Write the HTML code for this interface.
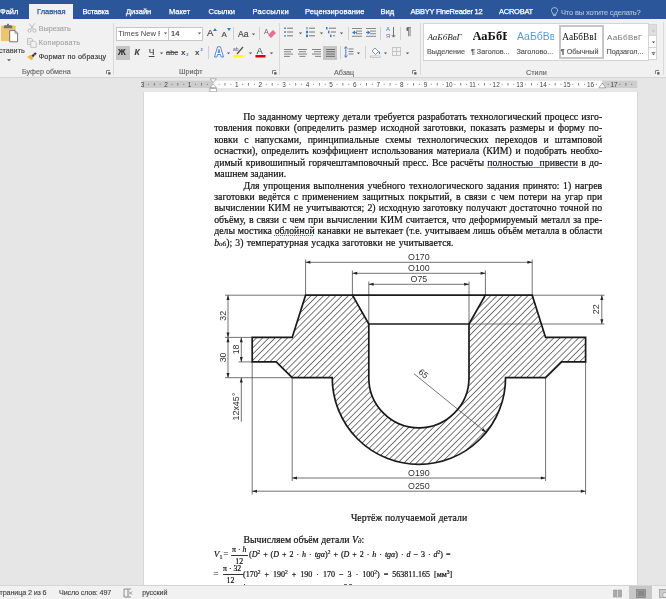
<!DOCTYPE html>
<html><head><meta charset="utf-8">
<style>
*{margin:0;padding:0;box-sizing:border-box}
html{}body{will-change:transform;width:666px;height:599px;overflow:hidden;background:#e6e6e6;font-family:"Liberation Sans",sans-serif}
.a{position:absolute;white-space:nowrap}
#tabs{position:absolute;left:0;top:0;width:666px;height:19px;background:#2b579a}
.tab{position:absolute;top:6px;font-size:7.5px;color:#fff;line-height:12px;-webkit-text-stroke:0.25px currentColor}
#ribbon{position:absolute;left:0;top:19px;width:666px;height:59px;background:#f1f1f1;border-bottom:1px solid #d5d5d5}
.rt{-webkit-text-stroke:0.15px currentColor;position:absolute;font-size:7.2px;color:#444;line-height:10px;white-space:nowrap}
.gl{-webkit-text-stroke:0.12px currentColor;position:absolute;font-size:7.2px;color:#666;line-height:10px;white-space:nowrap}
.sep{position:absolute;width:1px;background:#dadada}
#page{position:absolute;left:143.7px;top:92px;width:493.5px;height:493px;background:#fff;box-shadow:-0.6px 0 0 #cfcfcf,0.6px 0 0 #cfcfcf}
.ln{-webkit-text-stroke:0.2px #111;position:absolute;left:214px;width:388px;font-family:"Liberation Serif",serif;font-size:9.8px;line-height:11.4px;white-space:nowrap;color:#111;text-align:justify;text-align-last:justify}
#status{position:absolute;left:0;top:585px;width:666px;height:14px;background:#f1f1f1;border-top:1px solid #d5d5d5}
.st{-webkit-text-stroke:0.12px currentColor;position:absolute;top:2px;font-size:7.2px;color:#444;line-height:10px;white-space:nowrap}
.wv{text-decoration:underline solid #6a82d8;text-decoration-thickness:0.9px;text-underline-offset:1.3px}
.wr{text-decoration:underline dotted #e04848;text-decoration-thickness:1px;text-underline-offset:1.2px}
</style></head><body>
<div id="tabs">
  <div class="tab" style="left:0">Файл</div>
  <div style="position:absolute;left:29px;top:4px;width:44px;height:15px;background:#f1f1f1"></div>
  <div class="tab" style="left:37px;color:#2b579a">Главная</div>
  <div class="tab" style="left:82.5px;letter-spacing:-0.25px">Вставка</div>
  <div class="tab" style="left:126px">Дизайн</div>
  <div class="tab" style="left:169px">Макет</div>
  <div class="tab" style="left:208.5px">Ссылки</div>
  <div class="tab" style="left:252.5px;letter-spacing:0.35px">Рассылки</div>
  <div class="tab" style="left:305px;letter-spacing:0.12px">Рецензирование</div>
  <div class="tab" style="left:380.5px">Вид</div>
  <div class="tab" style="left:410.5px;letter-spacing:-0.25px">ABBYY FineReader 12</div>
  <div class="tab" style="left:499px;letter-spacing:-0.25px">ACROBAT</div>
  <svg class="a" style="left:550.5px;top:6.8px" width="7" height="10" viewBox="0 0 7 10"><path d="M3.5 0.6 A2.9 2.9 0 0 1 5.2 6 V7.3 H1.8 V6 A2.9 2.9 0 0 1 3.5 0.6Z" fill="none" stroke="#c0cee3" stroke-width="0.8"/><path d="M2 8.6 H5" stroke="#c0cee3" stroke-width="0.8"/></svg>
  <div class="tab" style="left:561px;top:6.8px;color:#b3c3dd;letter-spacing:-0.15px;-webkit-text-stroke:0.1px currentColor">Что вы хотите сделать?</div>
</div>
<div id="ribbon">
  <!-- clipboard group -->
  <svg class="a" style="left:0;top:4px" width="20" height="20" viewBox="0 0 20 20">
    <path d="M1.9 2.5 H14.7 Q15.7 2.5 15.7 3.5 V18 H0.9 V3.5 Q0.9 2.5 1.9 2.5Z" fill="#eac673"/>
    <path d="M3.8 5.2 V3.5 Q3.8 2.2 5.5 2.2 H6.8 Q7 0.6 8 0.6 Q9 0.6 9.2 2.2 H10.6 Q12.3 2.2 12.3 3.5 V5.2Z" fill="#6f6f6f"/>
    <path d="M9.7 7.6 H15 L17.6 10.2 V18.8 H9.7Z" fill="#fff" stroke="#6a6a6a" stroke-width="0.9"/>
    <path d="M15 7.6 V10.2 H17.6" fill="none" stroke="#6a6a6a" stroke-width="0.7"/>
  </svg>
  <div class="rt" style="left:-1px;top:26.5px">ставить</div>
  <svg class="a" style="left:6.5px;top:39.5px" width="4" height="3"><path d="M0 0.2 H4 L2 2.2Z" fill="#555"/></svg>
  <svg class="a" style="left:27px;top:4px" width="10" height="10" viewBox="0 0 10 10"><path d="M2.2 0.3 L6.3 6.3 M7.8 0.3 L3.7 6.3" stroke="#b5b5b5" stroke-width="0.9" fill="none"/><circle cx="2.5" cy="7.6" r="1.6" fill="none" stroke="#b5b5b5" stroke-width="0.9"/><circle cx="7.5" cy="7.6" r="1.6" fill="none" stroke="#b5b5b5" stroke-width="0.9"/></svg>
  <div class="rt" style="left:38.7px;top:4.8px;color:#a6a6a6">Вырезать</div>
  <svg class="a" style="left:27px;top:19px" width="10" height="10" viewBox="0 0 10 10"><path d="M0.5 0.5 H4.5 L5.5 1.5 V6.5 H0.5Z" fill="#eee" stroke="#b5b5b5" stroke-width="0.8"/><path d="M3.8 3.3 H7.8 L9.2 4.7 V9.3 H3.8Z" fill="#f4f4f4" stroke="#b5b5b5" stroke-width="0.8"/><path d="M1.5 3 H4 M1.5 4.5 H3" stroke="#c8c8c8" stroke-width="0.6"/></svg>
  <div class="rt" style="left:38.7px;top:19.2px;color:#a6a6a6;letter-spacing:0.3px">Копировать</div>
  <svg class="a" style="left:27px;top:33px" width="10" height="9" viewBox="0 0 10 9"><path d="M0 5 L3.6 2.8 L6.4 5.6 L5 8.6 Z" fill="#e8b84a"/><path d="M4.4 3.4 L8.2 0.2 L9.8 1.6 L6.2 5.2Z" fill="#3a3a3a"/><path d="M6.3 1.8 L8 3.4" stroke="#e8e8e8" stroke-width="0.5"/></svg>
  <div class="rt" style="left:38.7px;top:33.3px;color:#333;letter-spacing:0.18px">Формат по образцу</div>
  <div class="gl" style="left:22px;top:48.3px">Буфер обмена</div>
  <svg class="a" style="left:105.7px;top:50.8px" width="5" height="5"><path d="M0.5 4 V0.5 H4" fill="none" stroke="#777" stroke-width="0.9"/><rect x="2.2" y="2.2" width="2.3" height="2.3" fill="#555"/></svg>
  <div class="sep" style="left:113px;top:4px;height:52px"></div>

  <!-- font group -->
  <div class="a" style="left:116px;top:7.5px;width:53px;height:14px;background:#fff;border:1px solid #c6c6c6"></div>
  <div class="a" style="left:169px;top:7.5px;width:34px;height:14px;background:#fff;border:1px solid #c6c6c6;border-left:none"></div>
  <div class="rt" style="left:118.3px;top:9.5px;font-size:7.6px;color:#444;width:42px;overflow:hidden;-webkit-text-stroke:0">Times New Roman</div>
  <svg class="a" style="left:162.5px;top:13px" width="5" height="3"><path d="M0.8 0.4H4.2L2.5 2.2Z" fill="#555"/></svg>
  <div class="rt" style="left:171px;top:9.5px;font-size:7.6px;color:#333">14</div>
  <svg class="a" style="left:196.5px;top:13px" width="5" height="3"><path d="M0.8 0.4H4.2L2.5 2.2Z" fill="#555"/></svg>
  <div class="rt" style="left:207px;top:9px;font-size:9.5px;color:#444">A</div>
  <svg class="a" style="left:213px;top:9px" width="4" height="3"><path d="M0 3L2 0L4 3Z" fill="#3b7ac2"/></svg>
  <div class="rt" style="left:221.5px;top:10.5px;font-size:8px;color:#444">A</div>
  <svg class="a" style="left:227px;top:9px" width="4" height="3"><path d="M0 0L2 3L4 0Z" fill="#3b7ac2"/></svg>
  <div class="sep" style="left:233px;top:8px;height:13px;background:#d0d0d0"></div>
  <div class="rt" style="left:238px;top:9.5px;font-size:8.6px;color:#444">Aa</div>
  <svg class="a" style="left:250.5px;top:14px" width="5" height="3"><path d="M0.8 0.4H4.2L2.5 2.2Z" fill="#555"/></svg>
  <div class="sep" style="left:259px;top:8px;height:13px;background:#d0d0d0"></div>
  <svg class="a" style="left:264px;top:8px" width="12" height="12" viewBox="0 0 12 12"><text x="0" y="7" font-size="7" font-family="Liberation Sans" fill="#666">A</text><path d="M4 8 L9 3 L12 6 L7 11Z" fill="#e8708a"/></svg>

  <div class="a" style="left:116px;top:26.5px;width:13.5px;height:14px;background:#c5c5c5"></div>
  <div class="rt" style="left:118px;top:28px;font-size:8.5px;color:#333;font-weight:bold">Ж</div>
  <div class="rt" style="left:134.5px;top:28px;font-size:8.5px;color:#444;font-style:italic;font-weight:bold">К</div>
  <div class="rt" style="left:148.8px;top:28px;font-size:8.5px;color:#444;text-decoration:underline">Ч</div>
  <svg class="a" style="left:158.5px;top:33px" width="5" height="3"><path d="M0.8 0.4H4.2L2.5 2.2Z" fill="#555"/></svg>
  <div class="rt" style="left:166px;top:28.5px;font-size:7.5px;color:#555;text-decoration:line-through">abc</div>
  <svg class="a" style="left:181px;top:27px" width="9" height="12" viewBox="0 0 9 12"><text x="0" y="8.6" font-size="8" font-weight="bold" font-family="Liberation Sans" fill="#444">x</text><text x="5.2" y="9.8" font-size="4" font-weight="bold" font-family="Liberation Sans" fill="#3b7ac2">2</text></svg>
  <svg class="a" style="left:194.8px;top:27px" width="9" height="12" viewBox="0 0 9 12"><text x="0" y="8.6" font-size="8" font-weight="bold" font-family="Liberation Sans" fill="#444">x</text><text x="5.4" y="5.2" font-size="4" font-weight="bold" font-family="Liberation Sans" fill="#3b7ac2">2</text></svg>
  <div class="sep" style="left:208px;top:27px;height:13px;background:#d0d0d0"></div>
  <svg class="a" style="left:213.5px;top:27px" width="10" height="12" viewBox="0 0 10 12"><path d="M3.6 0.8 H6.4 L9.5 11 H7.2 L6.5 8.5 H3.5 L2.8 11 H0.5Z M4.1 6.6 H5.9 L5 3.4Z" fill="#fff" stroke="#3b7ac2" stroke-width="0.9" stroke-linejoin="round"/></svg>
  <svg class="a" style="left:225.5px;top:33px" width="5" height="3"><path d="M0.8 0.4H4.2L2.5 2.2Z" fill="#555"/></svg>
  <svg class="a" style="left:233px;top:26px" width="12" height="13" viewBox="0 0 12 13"><text x="0" y="6" font-size="5" font-family="Liberation Sans" fill="#555">ab</text><path d="M4 9 L10 2" stroke="#555" stroke-width="1.3"/><rect x="0.5" y="10" width="10" height="2.5" fill="#ffff00"/></svg>
  <svg class="a" style="left:247.5px;top:33px" width="5" height="3"><path d="M0.8 0.4H4.2L2.5 2.2Z" fill="#555"/></svg>
  <svg class="a" style="left:254.5px;top:26px" width="11" height="13" viewBox="0 0 11 13"><text x="1.5" y="9" font-size="9.5" font-family="Liberation Sans" fill="#444">A</text><rect x="0.5" y="10" width="10" height="2.5" fill="#e00000"/></svg>
  <svg class="a" style="left:268.5px;top:33px" width="5" height="3"><path d="M0.8 0.4H4.2L2.5 2.2Z" fill="#555"/></svg>
  <div class="gl" style="left:179px;top:47.9px">Шрифт</div>
  <svg class="a" style="left:271.7px;top:50.8px" width="5" height="5"><path d="M0.5 4 V0.5 H4" fill="none" stroke="#777" stroke-width="0.9"/><rect x="2.2" y="2.2" width="2.3" height="2.3" fill="#555"/></svg>
  <div class="sep" style="left:279px;top:4px;height:52px"></div>
  <!-- paragraph group -->
  <svg class="a" style="left:284px;top:8px" width="10" height="11" viewBox="0 0 10 11">
    <circle cx="1" cy="1.2" r="0.9" fill="#3b7ac2"/><circle cx="1" cy="5" r="0.9" fill="#3b7ac2"/><circle cx="1" cy="8.8" r="0.9" fill="#3b7ac2"/>
    <rect x="3" y="0.7" width="6" height="1" fill="#777"/><rect x="3" y="4.5" width="6" height="1" fill="#777"/><rect x="3" y="8.3" width="6" height="1" fill="#777"/>
  </svg><svg class="a" style="left:297.5px;top:12.7px" width="5" height="3"><path d="M0.8 0.4H4.2L2.5 2.2Z" fill="#555"/></svg>
  <svg class="a" style="left:305.5px;top:8px" width="10" height="11" viewBox="0 0 10 11">
    <rect x="0.5" y="0" width="1" height="2.5" fill="#3b7ac2"/><rect x="0" y="3.8" width="2" height="2.5" fill="#3b7ac2"/><rect x="0" y="7.6" width="2" height="2.5" fill="#3b7ac2"/>
    <rect x="3" y="0.7" width="6" height="1" fill="#777"/><rect x="3" y="4.5" width="6" height="1" fill="#777"/><rect x="3" y="8.3" width="6" height="1" fill="#777"/>
  </svg><svg class="a" style="left:318.5px;top:12.7px" width="5" height="3"><path d="M0.8 0.4H4.2L2.5 2.2Z" fill="#555"/></svg>
  <svg class="a" style="left:326px;top:8px" width="11" height="11" viewBox="0 0 11 11">
    <rect x="0" y="0" width="1.5" height="2.5" fill="#3b7ac2"/><rect x="2" y="3.8" width="1.5" height="2.5" fill="#3b7ac2"/><rect x="4" y="7.6" width="1.5" height="2.5" fill="#3b7ac2"/>
    <rect x="3" y="0.7" width="7" height="1" fill="#777"/><rect x="5" y="4.5" width="5" height="1" fill="#777"/><rect x="7" y="8.3" width="2" height="1" fill="#777"/>
  </svg><svg class="a" style="left:338.5px;top:12.7px" width="5" height="3"><path d="M0.8 0.4H4.2L2.5 2.2Z" fill="#555"/></svg>
  <div class="sep" style="left:347.5px;top:8px;height:13px;background:#d0d0d0"></div>
  <svg class="a" style="left:352px;top:9px" width="11" height="10" viewBox="0 0 11 10">
    <rect x="0" y="0" width="10" height="1" fill="#888"/><rect x="4" y="2.6" width="6" height="1" fill="#888"/><rect x="4" y="5.2" width="6" height="1" fill="#888"/><rect x="0" y="7.8" width="10" height="1" fill="#888"/>
    <path d="M0 4.4 L3 2.4 V6.4Z" fill="#3b7ac2"/><rect x="2" y="3.9" width="3" height="1" fill="#3b7ac2"/>
  </svg>
  <svg class="a" style="left:366px;top:9px" width="11" height="10" viewBox="0 0 11 10">
    <rect x="0" y="0" width="10" height="1" fill="#888"/><rect x="4" y="2.6" width="6" height="1" fill="#888"/><rect x="4" y="5.2" width="6" height="1" fill="#888"/><rect x="0" y="7.8" width="10" height="1" fill="#888"/>
    <path d="M4.5 4.4 L1.5 2.4 V6.4Z" fill="#3b7ac2"/><rect x="0" y="3.9" width="3" height="1" fill="#3b7ac2"/>
  </svg>
  <div class="sep" style="left:380px;top:8px;height:13px;background:#d0d0d0"></div>
  <svg class="a" style="left:385.5px;top:7px" width="11" height="13" viewBox="0 0 11 13">
    <text x="0" y="5.3" font-size="5.8" font-family="Liberation Sans" fill="#3b7ac2">A</text>
    <text x="0" y="11.5" font-size="5.8" font-family="Liberation Sans" fill="#9b59b6">Я</text>
    <path d="M7.5 1 V11 M5.8 9 L7.5 11.2 L9.2 9" stroke="#666" stroke-width="0.9" fill="none"/>
  </svg>
  <div class="sep" style="left:399.5px;top:8px;height:13px;background:#d0d0d0"></div>
  <div class="rt" style="left:406px;top:8px;font-size:10px;color:#666">¶</div>

  <svg class="a" style="left:284px;top:29.5px" width="10" height="8" viewBox="0 0 10 8"><rect x="0" y="0" width="9" height="0.9" fill="#777"/><rect x="0" y="2.3" width="7" height="0.9" fill="#777"/><rect x="0" y="4.6" width="9" height="0.9" fill="#777"/><rect x="0" y="6.9" width="6" height="0.9" fill="#777"/></svg>
  <svg class="a" style="left:298px;top:29.5px" width="10" height="8" viewBox="0 0 10 8"><rect x="0" y="0" width="9" height="0.9" fill="#777"/><rect x="1" y="2.3" width="7" height="0.9" fill="#777"/><rect x="0" y="4.6" width="9" height="0.9" fill="#777"/><rect x="1.5" y="6.9" width="6" height="0.9" fill="#777"/></svg>
  <svg class="a" style="left:311.5px;top:29.5px" width="10" height="8" viewBox="0 0 10 8"><rect x="0" y="0" width="9" height="0.9" fill="#777"/><rect x="2" y="2.3" width="7" height="0.9" fill="#777"/><rect x="0" y="4.6" width="9" height="0.9" fill="#777"/><rect x="3" y="6.9" width="6" height="0.9" fill="#777"/></svg>
  <div class="a" style="left:323px;top:26.5px;width:14px;height:14px;background:#c5c5c5"></div>
  <svg class="a" style="left:325.5px;top:29.5px" width="10" height="8" viewBox="0 0 10 8"><rect x="0" y="0" width="9" height="0.9" fill="#666"/><rect x="0" y="2.3" width="9" height="0.9" fill="#666"/><rect x="0" y="4.6" width="9" height="0.9" fill="#666"/><rect x="0" y="6.9" width="9" height="0.9" fill="#666"/></svg>
  <div class="sep" style="left:339.5px;top:27px;height:13px;background:#d0d0d0"></div>
  <svg class="a" style="left:344px;top:27px" width="10" height="12" viewBox="0 0 10 12">
    <path d="M1.8 1 V11 M0.2 2.6 L1.8 0.6 L3.4 2.6 M0.2 9.4 L1.8 11.4 L3.4 9.4" stroke="#3b7ac2" stroke-width="0.9" fill="none"/>
    <rect x="4.5" y="2.5" width="5" height="0.9" fill="#777"/><rect x="4.5" y="5" width="5" height="0.9" fill="#777"/><rect x="4.5" y="7.5" width="5" height="0.9" fill="#777"/>
  </svg><svg class="a" style="left:356px;top:33px" width="5" height="3"><path d="M0.8 0.4H4.2L2.5 2.2Z" fill="#555"/></svg>
  <div class="sep" style="left:365px;top:27px;height:13px;background:#d0d0d0"></div>
  <svg class="a" style="left:370px;top:27px" width="12" height="12" viewBox="0 0 12 12">
    <path d="M2 5 L5 2 L8.5 5.5 L5.5 8.5Z" fill="#fff" stroke="#777" stroke-width="0.8"/><path d="M8.5 5.5 Q10 6 9.5 8" stroke="#3b7ac2" stroke-width="1.2" fill="none"/>
    <rect x="0.5" y="10" width="10" height="1.5" fill="#fff" stroke="#999" stroke-width="0.5"/>
  </svg><svg class="a" style="left:383px;top:33px" width="5" height="3"><path d="M0.8 0.4H4.2L2.5 2.2Z" fill="#555"/></svg>
  <svg class="a" style="left:392px;top:28px" width="9" height="9" viewBox="0 0 9 9"><rect x="0.5" y="0.5" width="8" height="8" fill="none" stroke="#bbb" stroke-width="0.8"/><path d="M4.5 0.5V8.5M0.5 4.5H8.5" stroke="#bbb" stroke-width="0.8"/></svg><svg class="a" style="left:404.5px;top:33px" width="5" height="3"><path d="M0.8 0.4H4.2L2.5 2.2Z" fill="#555"/></svg>
  <div class="gl" style="left:334px;top:48.6px">Абзац</div>
  <svg class="a" style="left:412.2px;top:50.8px" width="5" height="5"><path d="M0.5 4 V0.5 H4" fill="none" stroke="#777" stroke-width="0.9"/><rect x="2.2" y="2.2" width="2.3" height="2.3" fill="#555"/></svg>
  <div class="sep" style="left:419.5px;top:4px;height:52px"></div>

  <!-- styles gallery -->
  <div class="a" style="left:423px;top:4.3px;width:226px;height:37.4px;background:#fff;border:1px solid #d4d4d4"></div>
  <div class="a" style="left:558.5px;top:6px;width:45px;height:34px;border:2px solid #c6c6c6"></div>
  <div class="a" style="left:427.5px;top:12px;font-family:'Liberation Serif',serif;font-style:italic;font-size:9px;color:#222;line-height:12px">АаБбВвГ</div>
  <div class="rt" style="left:427px;top:28px;color:#555">Выделение</div>
  <div class="a" style="left:472.5px;top:9.5px;width:34.5px;overflow:hidden;font-family:'Liberation Serif',serif;font-weight:bold;font-size:12.5px;color:#111;line-height:15px">АаБбВ</div>
  <div class="rt" style="left:471px;top:28px;color:#555">¶ Заголов...</div>
  <div class="a" style="left:517px;top:10px;width:37px;overflow:hidden;font-family:'Liberation Sans',sans-serif;font-size:10.5px;color:#5b9bd5;line-height:14px">АаБбВв</div>
  <div class="rt" style="left:516.5px;top:28px;color:#555">Заголово...</div>
  <div class="a" style="left:562.3px;top:12px;width:37px;overflow:hidden;font-family:'Liberation Serif',serif;font-size:9.3px;color:#111;line-height:12px">АаБбВвІ</div>
  <div class="rt" style="left:560.8px;top:28px;color:#555">¶ Обычный</div>
  <div class="a" style="left:607px;top:12.5px;width:38px;overflow:hidden;font-family:'Liberation Sans',sans-serif;font-size:8px;color:#777;line-height:11px;letter-spacing:0.3px">АаБбВвГ</div>
  <div class="rt" style="left:606.5px;top:28px;color:#555">Подзагол...</div>
  <div class="a" style="left:648.4px;top:4.7px;width:9px;height:36.5px;background:#fff;border:1px solid #d4d4d4"></div>
  <div class="a" style="left:648.4px;top:4.7px;width:9px;height:12.7px;background:#dedede;border:1px solid #d4d4d4"></div>
  <div class="a" style="left:648.4px;top:17.2px;width:9px;height:12px;border:1px solid #d4d4d4;border-top:none"></div>
  <svg class="a" style="left:650.6px;top:9.5px" width="5" height="3"><path d="M0.5 2.5H4.5L2.5 0.5Z" fill="#c4c4c4"/></svg>
  <svg class="a" style="left:650.6px;top:21.8px" width="5" height="3"><path d="M0.8 0.4H4.2L2.5 2.2Z" fill="#444"/></svg>
  <svg class="a" style="left:650.6px;top:33.2px" width="5" height="4"><rect x="0.6" y="0" width="3.8" height="0.7" fill="#555"/><path d="M0.8 1.5H4.2L2.5 3.3Z" fill="#555"/></svg>
  <div class="sep" style="left:662.5px;top:3px;height:53px"></div>
  <div class="gl" style="left:526px;top:48.6px">Стили</div>
  <svg class="a" style="left:654.7px;top:51.3px" width="5" height="5"><path d="M0.5 4 V0.5 H4" fill="none" stroke="#777" stroke-width="0.9"/><rect x="2.2" y="2.2" width="2.3" height="2.3" fill="#555"/></svg>
</div>
<svg class="a" style="left:0;top:77px" width="666" height="16" viewBox="0 77 666 16">
<rect x="142" y="80.6" width="495.2" height="7.4" fill="#cdcdcd"/>
<rect x="213.2" y="80.6" width="389.09999999999997" height="7.4" fill="#fff"/>
<text x="142.46" y="86.6" font-size="6.4" text-anchor="middle" font-family="Liberation Sans" fill="#444">3</text>
<rect x="147.91" y="83.85" width="0.9" height="0.9" fill="#666"/>
<rect x="153.85" y="83" width="0.8" height="2.6" fill="#666"/>
<rect x="159.69" y="83.85" width="0.9" height="0.9" fill="#666"/>
<text x="166.04" y="86.6" font-size="6.4" text-anchor="middle" font-family="Liberation Sans" fill="#444">2</text>
<rect x="171.49" y="83.85" width="0.9" height="0.9" fill="#666"/>
<rect x="177.43" y="83" width="0.8" height="2.6" fill="#666"/>
<rect x="183.28" y="83.85" width="0.9" height="0.9" fill="#666"/>
<text x="189.62" y="86.6" font-size="6.4" text-anchor="middle" font-family="Liberation Sans" fill="#444">1</text>
<rect x="195.06" y="83.85" width="0.9" height="0.9" fill="#666"/>
<rect x="201.01" y="83" width="0.8" height="2.6" fill="#666"/>
<rect x="206.85" y="83.85" width="0.9" height="0.9" fill="#666"/>
<rect x="218.65" y="83.85" width="0.9" height="0.9" fill="#666"/>
<rect x="224.59" y="83" width="0.8" height="2.6" fill="#666"/>
<rect x="230.44" y="83.85" width="0.9" height="0.9" fill="#666"/>
<text x="236.78" y="86.6" font-size="6.4" text-anchor="middle" font-family="Liberation Sans" fill="#444">1</text>
<rect x="242.22" y="83.85" width="0.9" height="0.9" fill="#666"/>
<rect x="248.17" y="83" width="0.8" height="2.6" fill="#666"/>
<rect x="254.01" y="83.85" width="0.9" height="0.9" fill="#666"/>
<text x="260.36" y="86.6" font-size="6.4" text-anchor="middle" font-family="Liberation Sans" fill="#444">2</text>
<rect x="265.81" y="83.85" width="0.9" height="0.9" fill="#666"/>
<rect x="271.75" y="83" width="0.8" height="2.6" fill="#666"/>
<rect x="277.59" y="83.85" width="0.9" height="0.9" fill="#666"/>
<text x="283.94" y="86.6" font-size="6.4" text-anchor="middle" font-family="Liberation Sans" fill="#444">3</text>
<rect x="289.38" y="83.85" width="0.9" height="0.9" fill="#666"/>
<rect x="295.33" y="83" width="0.8" height="2.6" fill="#666"/>
<rect x="301.18" y="83.85" width="0.9" height="0.9" fill="#666"/>
<text x="307.52" y="86.6" font-size="6.4" text-anchor="middle" font-family="Liberation Sans" fill="#444">4</text>
<rect x="312.96" y="83.85" width="0.9" height="0.9" fill="#666"/>
<rect x="318.91" y="83" width="0.8" height="2.6" fill="#666"/>
<rect x="324.75" y="83.85" width="0.9" height="0.9" fill="#666"/>
<text x="331.10" y="86.6" font-size="6.4" text-anchor="middle" font-family="Liberation Sans" fill="#444">5</text>
<rect x="336.55" y="83.85" width="0.9" height="0.9" fill="#666"/>
<rect x="342.49" y="83" width="0.8" height="2.6" fill="#666"/>
<rect x="348.33" y="83.85" width="0.9" height="0.9" fill="#666"/>
<text x="354.68" y="86.6" font-size="6.4" text-anchor="middle" font-family="Liberation Sans" fill="#444">6</text>
<rect x="360.12" y="83.85" width="0.9" height="0.9" fill="#666"/>
<rect x="366.07" y="83" width="0.8" height="2.6" fill="#666"/>
<rect x="371.92" y="83.85" width="0.9" height="0.9" fill="#666"/>
<text x="378.26" y="86.6" font-size="6.4" text-anchor="middle" font-family="Liberation Sans" fill="#444">7</text>
<rect x="383.70" y="83.85" width="0.9" height="0.9" fill="#666"/>
<rect x="389.65" y="83" width="0.8" height="2.6" fill="#666"/>
<rect x="395.49" y="83.85" width="0.9" height="0.9" fill="#666"/>
<text x="401.84" y="86.6" font-size="6.4" text-anchor="middle" font-family="Liberation Sans" fill="#444">8</text>
<rect x="407.29" y="83.85" width="0.9" height="0.9" fill="#666"/>
<rect x="413.23" y="83" width="0.8" height="2.6" fill="#666"/>
<rect x="419.07" y="83.85" width="0.9" height="0.9" fill="#666"/>
<text x="425.42" y="86.6" font-size="6.4" text-anchor="middle" font-family="Liberation Sans" fill="#444">9</text>
<rect x="430.86" y="83.85" width="0.9" height="0.9" fill="#666"/>
<rect x="436.81" y="83" width="0.8" height="2.6" fill="#666"/>
<rect x="442.65" y="83.85" width="0.9" height="0.9" fill="#666"/>
<text x="449.00" y="86.6" font-size="6.4" text-anchor="middle" font-family="Liberation Sans" fill="#444">10</text>
<rect x="454.44" y="83.85" width="0.9" height="0.9" fill="#666"/>
<rect x="460.39" y="83" width="0.8" height="2.6" fill="#666"/>
<rect x="466.23" y="83.85" width="0.9" height="0.9" fill="#666"/>
<text x="472.58" y="86.6" font-size="6.4" text-anchor="middle" font-family="Liberation Sans" fill="#444">11</text>
<rect x="478.02" y="83.85" width="0.9" height="0.9" fill="#666"/>
<rect x="483.97" y="83" width="0.8" height="2.6" fill="#666"/>
<rect x="489.81" y="83.85" width="0.9" height="0.9" fill="#666"/>
<text x="496.16" y="86.6" font-size="6.4" text-anchor="middle" font-family="Liberation Sans" fill="#444">12</text>
<rect x="501.60" y="83.85" width="0.9" height="0.9" fill="#666"/>
<rect x="507.55" y="83" width="0.8" height="2.6" fill="#666"/>
<rect x="513.39" y="83.85" width="0.9" height="0.9" fill="#666"/>
<text x="519.74" y="86.6" font-size="6.4" text-anchor="middle" font-family="Liberation Sans" fill="#444">13</text>
<rect x="525.18" y="83.85" width="0.9" height="0.9" fill="#666"/>
<rect x="531.13" y="83" width="0.8" height="2.6" fill="#666"/>
<rect x="536.97" y="83.85" width="0.9" height="0.9" fill="#666"/>
<text x="543.32" y="86.6" font-size="6.4" text-anchor="middle" font-family="Liberation Sans" fill="#444">14</text>
<rect x="548.76" y="83.85" width="0.9" height="0.9" fill="#666"/>
<rect x="554.71" y="83" width="0.8" height="2.6" fill="#666"/>
<rect x="560.55" y="83.85" width="0.9" height="0.9" fill="#666"/>
<text x="566.90" y="86.6" font-size="6.4" text-anchor="middle" font-family="Liberation Sans" fill="#444">15</text>
<rect x="572.34" y="83.85" width="0.9" height="0.9" fill="#666"/>
<rect x="578.29" y="83" width="0.8" height="2.6" fill="#666"/>
<rect x="584.13" y="83.85" width="0.9" height="0.9" fill="#666"/>
<text x="590.48" y="86.6" font-size="6.4" text-anchor="middle" font-family="Liberation Sans" fill="#444">16</text>
<rect x="595.92" y="83.85" width="0.9" height="0.9" fill="#666"/>
<rect x="601.87" y="83" width="0.8" height="2.6" fill="#666"/>
<rect x="607.71" y="83.85" width="0.9" height="0.9" fill="#666"/>
<text x="614.06" y="86.6" font-size="6.4" text-anchor="middle" font-family="Liberation Sans" fill="#444">17</text>
<rect x="619.50" y="83.85" width="0.9" height="0.9" fill="#666"/>
<rect x="625.45" y="83" width="0.8" height="2.6" fill="#666"/>
<rect x="631.29" y="83.85" width="0.9" height="0.9" fill="#666"/>
<path d="M210.0 78.8 H216.39999999999998 L213.2 82.6Z" fill="#fff" stroke="#888" stroke-width="0.6"/>
<path d="M210.0 87.6 H216.39999999999998 L213.2 83.8Z" fill="#fff" stroke="#888" stroke-width="0.6"/>
<rect x="210.0" y="88.4" width="6.4" height="3.4" fill="#fff" stroke="#888" stroke-width="0.6"/>
<path d="M598.9 87.8 H605.6999999999999 L602.3 83.2Z" fill="#fff" stroke="#777" stroke-width="0.6"/>
</svg>
<div id="page"></div>
<div class="ln" style="left:243.3px;top:111.00px;width:358.9px;">По заданному чертежу детали требуется разработать технологический процесс изго-</div>
<div class="ln" style="left:214.2px;top:122.42px;width:388.0px;">товления поковки (определить размер исходной заготовки, показать размеры и форму по-</div>
<div class="ln" style="left:214.2px;top:133.84px;width:388.0px;">ковки с напусками, принципиальные схемы технологических переходов и штамповой</div>
<div class="ln" style="left:214.2px;top:145.26px;width:388.0px;">оснастки), определить коэффициент использования материала (КИМ) и подобрать необхо-</div>
<div class="ln" style="left:214.2px;top:156.68px;width:388.0px;">димый кривошипный горячештамповочный пресс. Все расчёты <span class="wv">полностью&nbsp; привести</span> в до-</div>
<div class="ln" style="left:214.2px;top:168.10px;width:388.0px;text-align:left;text-align-last:left;">машнем задании.</div>
<div class="ln" style="left:243.5px;top:179.52px;width:358.7px;">Для упрощения выполнения учебного технологического задания принято: 1) нагрев</div>
<div class="ln" style="left:214.2px;top:190.94px;width:388.0px;">заготовки ведётся с применением защитных покрытий, в связи с чем потери на угар при</div>
<div class="ln" style="left:214.2px;top:202.36px;width:388.0px;">вычислении КИМ не учитываются; 2) исходную заготовку получают достаточно точной по</div>
<div class="ln" style="left:214.2px;top:213.78px;width:388.0px;">объёму, в связи с чем при вычислении КИМ считается, что деформируемый металл за пре-</div>
<div class="ln" style="left:214.2px;top:225.20px;width:388.0px;">делы мостика <span class="wr">облойной</span> канавки не вытекает (т.е. учитываем лишь объём металла в области</div>
<div class="ln" style="left:214.2px;top:236.62px;width:388.0px;text-align:left;text-align-last:left;word-spacing:0.75px;"><i>b</i><span style="font-size:7px">об</span>); 3) температурная усадка заготовки не учитывается.</div>
<!--DRAWING--><svg class="a" style="left:0;top:0" width="666" height="599" viewBox="0 0 666 599">
<defs><pattern id="h" patternUnits="userSpaceOnUse" width="4.38" height="20" patternTransform="translate(300 300) rotate(45)"><rect x="0" y="0" width="0.8" height="20" fill="#5a5a5a"/></pattern></defs>
<path d="M305.60 295.20 L352.40 295.20 L368.80 324.00 L368.80 377.70 A50.0 50.0 0 0 0 469.00 377.70 L469.00 324.00 L485.40 295.20 L532.20 295.20 L545.60 337.40 L585.60 337.40 L585.60 361.90 L561.60 361.90 L545.60 377.70 L505.57 377.70 A86.67 86.67 0 0 1 332.23 377.70 L292.20 377.70 L276.20 361.90 L252.20 361.90 L252.20 337.40 L292.20 337.40 Z" fill="url(#h)"/>
<line x1="305.60" y1="259.50" x2="305.60" y2="295.20" stroke="#444" stroke-width="0.75" fill="none"/>
<line x1="532.20" y1="259.50" x2="532.20" y2="295.20" stroke="#444" stroke-width="0.75" fill="none"/>
<line x1="352.40" y1="270.50" x2="352.40" y2="295.20" stroke="#444" stroke-width="0.75" fill="none"/>
<line x1="485.40" y1="270.50" x2="485.40" y2="295.20" stroke="#444" stroke-width="0.75" fill="none"/>
<line x1="368.80" y1="281.50" x2="368.80" y2="324.00" stroke="#444" stroke-width="0.75" fill="none"/>
<line x1="469.00" y1="281.50" x2="469.00" y2="324.00" stroke="#444" stroke-width="0.75" fill="none"/>
<line x1="225.00" y1="295.20" x2="305.60" y2="295.20" stroke="#444" stroke-width="0.75" fill="none"/>
<line x1="532.20" y1="295.20" x2="604.50" y2="295.20" stroke="#444" stroke-width="0.75" fill="none"/>
<line x1="469.00" y1="324.00" x2="604.50" y2="324.00" stroke="#444" stroke-width="0.75" fill="none"/>
<line x1="225.00" y1="337.40" x2="252.20" y2="337.40" stroke="#444" stroke-width="0.75" fill="none"/>
<line x1="238.50" y1="361.90" x2="252.20" y2="361.90" stroke="#444" stroke-width="0.75" fill="none"/>
<line x1="225.00" y1="377.70" x2="292.20" y2="377.70" stroke="#444" stroke-width="0.75" fill="none"/>
<line x1="252.20" y1="361.90" x2="252.20" y2="494.50" stroke="#444" stroke-width="0.75" fill="none"/>
<line x1="585.60" y1="361.90" x2="585.60" y2="494.50" stroke="#444" stroke-width="0.75" fill="none"/>
<line x1="292.20" y1="377.70" x2="292.20" y2="481.00" stroke="#444" stroke-width="0.75" fill="none"/>
<line x1="545.60" y1="377.70" x2="545.60" y2="481.00" stroke="#444" stroke-width="0.75" fill="none"/>
<line x1="305.60" y1="262.30" x2="532.20" y2="262.30" stroke="#444" stroke-width="0.75" fill="none"/>
<path d="M0 0 L-4.8 -1.5 L-4.8 1.5Z" fill="#222" transform="translate(305.60 262.30) rotate(180.0)"/>
<path d="M0 0 L-4.8 -1.5 L-4.8 1.5Z" fill="#222" transform="translate(532.20 262.30) rotate(0.0)"/>
<line x1="352.40" y1="273.30" x2="485.40" y2="273.30" stroke="#444" stroke-width="0.75" fill="none"/>
<path d="M0 0 L-4.8 -1.5 L-4.8 1.5Z" fill="#222" transform="translate(352.40 273.30) rotate(180.0)"/>
<path d="M0 0 L-4.8 -1.5 L-4.8 1.5Z" fill="#222" transform="translate(485.40 273.30) rotate(0.0)"/>
<line x1="368.80" y1="284.30" x2="469.00" y2="284.30" stroke="#444" stroke-width="0.75" fill="none"/>
<path d="M0 0 L-4.8 -1.5 L-4.8 1.5Z" fill="#222" transform="translate(368.80 284.30) rotate(180.0)"/>
<path d="M0 0 L-4.8 -1.5 L-4.8 1.5Z" fill="#222" transform="translate(469.00 284.30) rotate(0.0)"/>
<line x1="292.20" y1="478.00" x2="545.60" y2="478.00" stroke="#444" stroke-width="0.75" fill="none"/>
<path d="M0 0 L-4.8 -1.5 L-4.8 1.5Z" fill="#222" transform="translate(292.20 478.00) rotate(180.0)"/>
<path d="M0 0 L-4.8 -1.5 L-4.8 1.5Z" fill="#222" transform="translate(545.60 478.00) rotate(0.0)"/>
<line x1="252.20" y1="491.20" x2="585.60" y2="491.20" stroke="#444" stroke-width="0.75" fill="none"/>
<path d="M0 0 L-4.8 -1.5 L-4.8 1.5Z" fill="#222" transform="translate(252.20 491.20) rotate(180.0)"/>
<path d="M0 0 L-4.8 -1.5 L-4.8 1.5Z" fill="#222" transform="translate(585.60 491.20) rotate(0.0)"/>
<line x1="228.00" y1="295.20" x2="228.00" y2="337.40" stroke="#444" stroke-width="0.75" fill="none"/>
<path d="M0 0 L-4.8 -1.5 L-4.8 1.5Z" fill="#222" transform="translate(228.00 295.20) rotate(-90.0)"/>
<path d="M0 0 L-4.8 -1.5 L-4.8 1.5Z" fill="#222" transform="translate(228.00 337.40) rotate(90.0)"/>
<line x1="228.00" y1="337.40" x2="228.00" y2="377.70" stroke="#444" stroke-width="0.75" fill="none"/>
<path d="M0 0 L-4.8 -1.5 L-4.8 1.5Z" fill="#222" transform="translate(228.00 337.40) rotate(-90.0)"/>
<path d="M0 0 L-4.8 -1.5 L-4.8 1.5Z" fill="#222" transform="translate(228.00 377.70) rotate(90.0)"/>
<line x1="241.30" y1="337.40" x2="241.30" y2="361.90" stroke="#444" stroke-width="0.75" fill="none"/>
<path d="M0 0 L-4.8 -1.5 L-4.8 1.5Z" fill="#222" transform="translate(241.30 337.40) rotate(-90.0)"/>
<path d="M0 0 L-4.8 -1.5 L-4.8 1.5Z" fill="#222" transform="translate(241.30 361.90) rotate(90.0)"/>
<line x1="601.80" y1="295.20" x2="601.80" y2="324.00" stroke="#444" stroke-width="0.75" fill="none"/>
<path d="M0 0 L-4.8 -1.5 L-4.8 1.5Z" fill="#222" transform="translate(601.80 295.20) rotate(-90.0)"/>
<path d="M0 0 L-4.8 -1.5 L-4.8 1.5Z" fill="#222" transform="translate(601.80 324.00) rotate(90.0)"/>
<line x1="241.3" y1="377.70" x2="241.3" y2="421.8" stroke="#444" stroke-width="0.75" fill="none"/>
<path d="M0 0 L-4.8 -1.5 L-4.8 1.5Z" fill="#222" transform="translate(241.30 377.70) rotate(-90.0)"/>
<line x1="413.86" y1="373.60" x2="486.15" y2="432.38" stroke="#444" stroke-width="0.75" fill="none"/>
<path d="M0 0 L-4.8 -1.5 L-4.8 1.5Z" fill="#222" transform="translate(486.15 432.38) rotate(39.1)"/>
<path d="M305.60 295.20 L352.40 295.20 L368.80 324.00 L368.80 377.70 A50.0 50.0 0 0 0 469.00 377.70 L469.00 324.00 L485.40 295.20 L532.20 295.20 L545.60 337.40 L585.60 337.40 L585.60 361.90 L561.60 361.90 L545.60 377.70 L505.57 377.70 A86.67 86.67 0 0 1 332.23 377.70 L292.20 377.70 L276.20 361.90 L252.20 361.90 L252.20 337.40 L292.20 337.40 Z" stroke="#1a1a1a" stroke-width="1.7" fill="none" stroke-linejoin="miter"/>
<line x1="352.40" y1="295.20" x2="485.40" y2="295.20" stroke="#1a1a1a" stroke-width="1.7"/>
<line x1="368.80" y1="324.00" x2="469.00" y2="324.00" stroke="#1a1a1a" stroke-width="1.7"/>
<text x="418.9" y="260.4" font-family="Liberation Sans" font-size="8.9" fill="#333" text-anchor="middle">O170</text>
<text x="418.9" y="270.9" font-family="Liberation Sans" font-size="8.9" fill="#333" text-anchor="middle">O100</text>
<text x="418.9" y="282.1" font-family="Liberation Sans" font-size="8.9" fill="#333" text-anchor="middle">O75</text>
<text x="418.9" y="476.2" font-family="Liberation Sans" font-size="8.9" fill="#333" text-anchor="middle">O190</text>
<text x="418.9" y="489.4" font-family="Liberation Sans" font-size="8.9" fill="#333" text-anchor="middle">O250</text>
<text transform="translate(226.0 315.8) rotate(-90)" font-family="Liberation Sans" font-size="8.9" fill="#333" text-anchor="middle">32</text>
<text transform="translate(226.0 357.4) rotate(-90)" font-family="Liberation Sans" font-size="8.9" fill="#333" text-anchor="middle">30</text>
<text transform="translate(238.6 349.4) rotate(-90)" font-family="Liberation Sans" font-size="8.9" fill="#333" text-anchor="middle">18</text>
<text transform="translate(239.0 406.6) rotate(-90)" font-family="Liberation Sans" font-size="8.9" fill="#333" text-anchor="middle">12x45°</text>
<text transform="translate(599.2 309.3) rotate(-90)" font-family="Liberation Sans" font-size="8.9" fill="#333" text-anchor="middle">22</text>
<text transform="translate(421.5 376) rotate(39.1)" font-family="Liberation Sans" font-size="8.9" fill="#333" text-anchor="middle">65</text>
</svg><!--/DRAWING-->

<div class="a" style="left:350.9px;top:511.8px;-webkit-text-stroke:0.2px #111;letter-spacing:0.11px;font-family:'Liberation Serif',serif;font-size:9.8px;line-height:11.4px;color:#111">Чертёж получаемой детали</div>
<div class="a" style="left:243.5px;top:533.5px;-webkit-text-stroke:0.2px #111;font-family:'Liberation Serif',serif;font-size:9.8px;line-height:11.4px;color:#111">Вычисляем объём детали <i>V</i><i style="font-size:7px">д</i>:</div>
<div id="f1" class="a" style="left:213.8px;top:549px;font-family:'Liberation Serif',serif;color:#111;-webkit-text-stroke:0.15px #111;font-size:9.2px;line-height:11px"><i>V</i><span style="font-size:6px;position:relative;top:1.5px">1</span></div>
<div class="a" style="left:223.3px;top:548.6px;font-family:'Liberation Serif',serif;color:#222;font-size:9.5px;line-height:11px">=</div>
<div id="f1n" class="a" style="left:232px;top:545px;font-family:'Liberation Serif',serif;color:#111;-webkit-text-stroke:0.2px #111;font-size:7.8px;line-height:9px">π · <i>h</i></div>
<div class="a" style="left:231.4px;top:555px;width:16.2px;height:0.7px;background:#333"></div>
<div id="f1d" class="a" style="left:235.3px;top:556.5px;font-family:'Liberation Serif',serif;color:#111;-webkit-text-stroke:0.2px #111;font-size:7.8px;line-height:9px">12</div>
<div id="f1r" class="a" style="left:249px;top:550px;font-family:'Liberation Serif',serif;color:#111;-webkit-text-stroke:0.2px #111;font-size:8px;line-height:10px;word-spacing:0.95px">(<i>D</i><sup style="font-size:5.5px;vertical-align:3px;line-height:0">2</sup> + (<i>D</i> + 2 · <i>h</i> · <i>tgα</i>)<sup style="font-size:5.5px;vertical-align:3px;line-height:0">2</sup> + (<i>D</i> + 2 · <i>h</i> · <i>tgα</i>) · <i>d</i> − 3 · <i>d</i><sup style="font-size:5.5px;vertical-align:3px;line-height:0">2</sup>) =</div>
<div class="a" style="left:213.3px;top:568.6px;font-family:'Liberation Serif',serif;color:#222;font-size:9.5px;line-height:11px">=</div>
<div id="f2n" class="a" style="left:223px;top:564px;font-family:'Liberation Serif',serif;color:#111;-webkit-text-stroke:0.2px #111;font-size:7.8px;line-height:9px">π · 32</div>
<div class="a" style="left:222.5px;top:574px;width:20px;height:0.7px;background:#333"></div>
<div id="f2d" class="a" style="left:226.5px;top:575.5px;font-family:'Liberation Serif',serif;color:#111;-webkit-text-stroke:0.2px #111;font-size:7.8px;line-height:9px">12</div>
<div id="f2r" class="a" style="left:243px;top:569.5px;font-family:'Liberation Serif',serif;color:#111;-webkit-text-stroke:0.2px #111;font-size:8px;line-height:10px;word-spacing:2.03px">(170<sup style="font-size:5.5px;vertical-align:3px;line-height:0">2</sup> + 190<sup style="font-size:5.5px;vertical-align:3px;line-height:0">2</sup> + 190 · 170 − 3 · 100<sup style="font-size:5.5px;vertical-align:3px;line-height:0">2</sup>) = 563811.165 [мм<sup style="font-size:5.5px;vertical-align:3px;line-height:0">3</sup>]</div>
<div class="a" style="left:244px;top:583.5px;width:1.2px;height:1.5px;background:#444"></div>
<div class="a" style="left:344px;top:583.6px;width:3px;height:1.4px;background:#666"></div><div class="a" style="left:349px;top:583.6px;width:3px;height:1.4px;background:#666"></div>
<div id="status">
  <div class="st" style="left:-0.5px;letter-spacing:-0.12px">траница 2 из 6</div>
  <div class="st" style="left:59px;letter-spacing:-0.15px">Число слов: 497</div>
  <svg class="a" style="left:122.5px;top:2px" width="10" height="10" viewBox="0 0 10 10"><path d="M1 1 H5 V9 H1Z M5 1 H8 M5 9 H8" fill="none" stroke="#777" stroke-width="0.8"/><path d="M6 3.5 L9 6.5 M9 3.5 L6 6.5" stroke="#777" stroke-width="0.8"/></svg>
  <div class="st" style="left:142.3px;letter-spacing:-0.1px">русский</div>
  <svg class="a" style="left:612.5px;top:2.5px" width="9" height="9" viewBox="0 0 9 9"><path d="M0.5 1 H4 L4.5 1.5 L5 1 H8.5 V8 H5 L4.5 8.5 L4 8 H0.5Z" fill="#aaa" stroke="#888" stroke-width="0.5"/><path d="M4.5 1.5 V8" stroke="#eee" stroke-width="0.6"/></svg>
  <div class="a" style="left:629.2px;top:0;width:22.7px;height:14px;background:#c8c8c8"></div>
  <svg class="a" style="left:636.3px;top:2.5px" width="10" height="9" viewBox="0 0 10 9"><rect x="0.5" y="0.5" width="9" height="8" fill="#999" stroke="#777" stroke-width="0.6"/><rect x="2" y="2" width="6" height="5" fill="#888"/></svg>
  <svg class="a" style="left:659px;top:2.5px" width="8" height="9" viewBox="0 0 8 9"><rect x="0.5" y="0.5" width="9" height="8" fill="#ccc" stroke="#888" stroke-width="0.6"/><circle cx="6" cy="6" r="2.5" fill="#eee" stroke="#888" stroke-width="0.6"/></svg>
</div>
</body></html>
